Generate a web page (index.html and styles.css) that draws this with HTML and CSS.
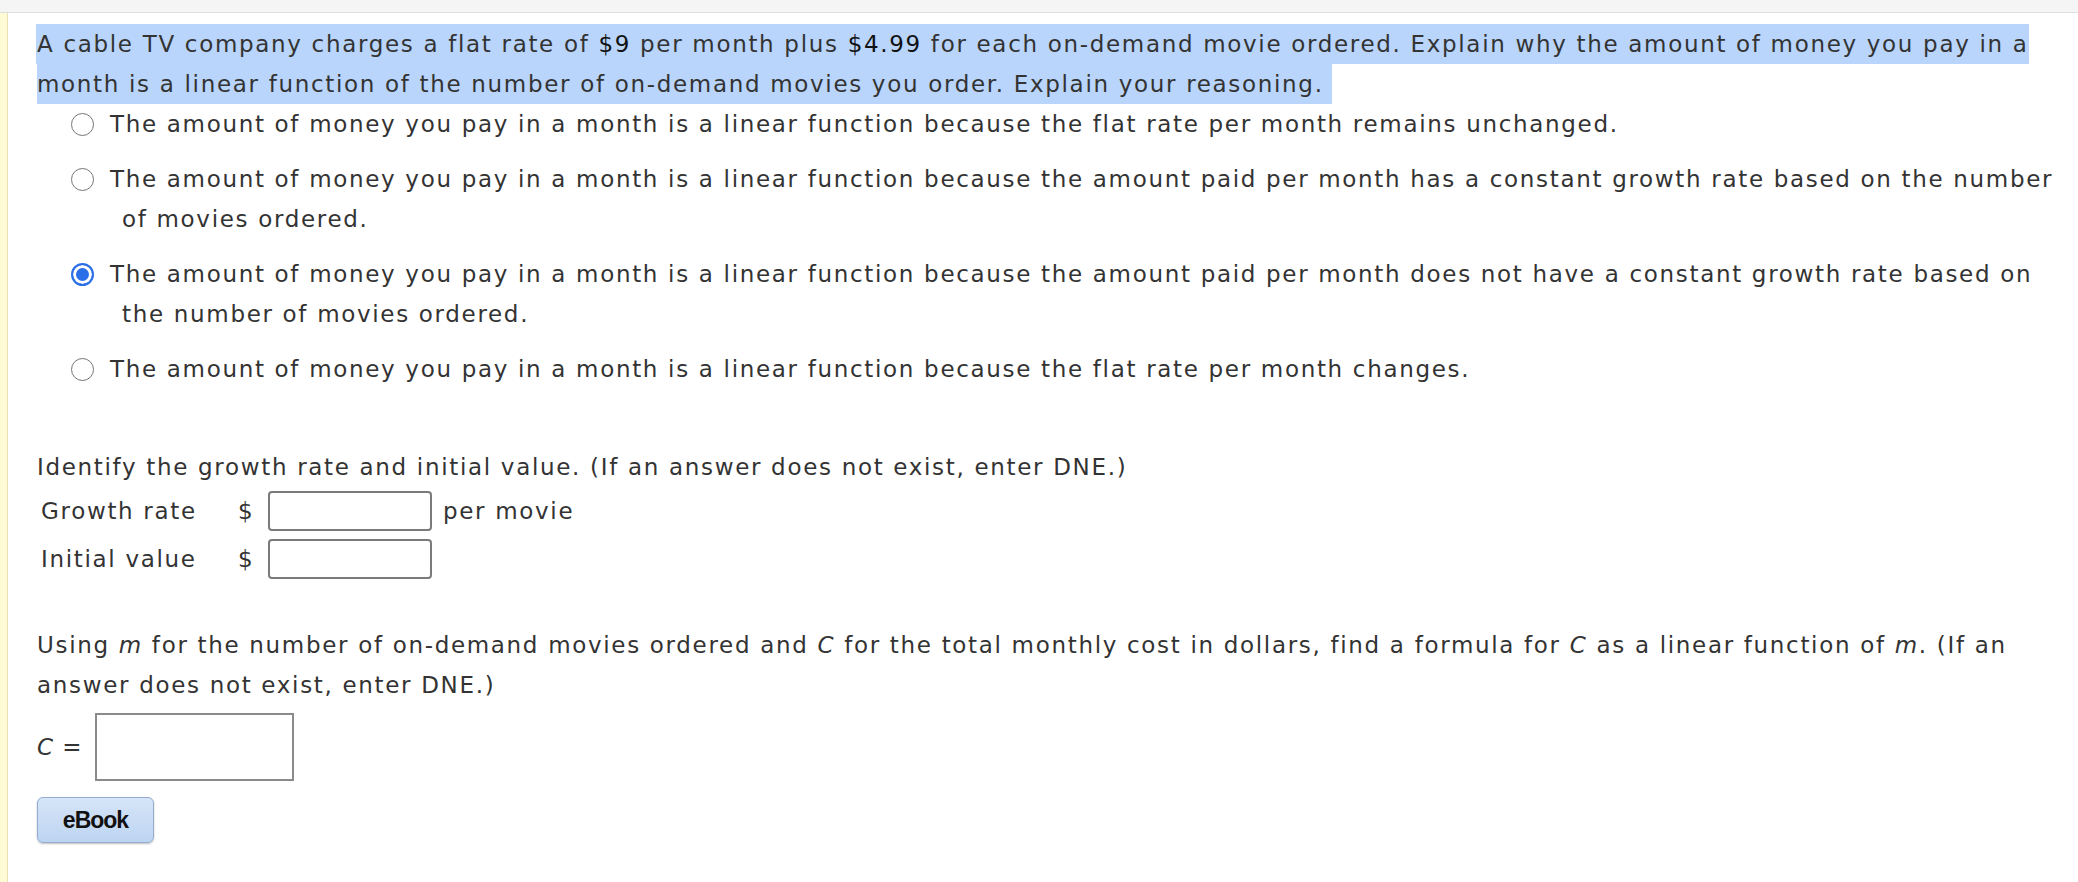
FILE: index.html
```html
<!DOCTYPE html>
<html>
<head>
<meta charset="utf-8">
<link rel="stylesheet" href="styles.css">
</head>
<body>
<div class="topbar"></div>
<div class="page">
  <div class="sidebar"></div>
  <main class="content">
    <p class="question"><span class="sel">A cable TV company charges a flat rate of <span class="num">$9</span> per month plus <span class="num">$4.99</span> for each on-demand movie ordered. Explain why the amount of money you pay in a month is a linear function of the number of on-demand movies you order. Explain your reasoning.</span></p>
    <div class="options">
      <div class="option"><span class="radio"></span><span class="label">The amount of money you pay in a month is a linear function because the flat rate per month remains unchanged.</span></div>
      <div class="option"><span class="radio"></span><span class="label">The amount of money you pay in a month is a linear function because the amount paid per month has a constant growth rate based on the number of movies ordered.</span></div>
      <div class="option"><span class="radio checked"></span><span class="label">The amount of money you pay in a month is a linear function because the amount paid per month does not have a constant growth rate based on the number of movies ordered.</span></div>
      <div class="option"><span class="radio"></span><span class="label">The amount of money you pay in a month is a linear function because the flat rate per month changes.</span></div>
    </div>

    <p class="prompt">Identify the growth rate and initial value. (If an answer does not exist, enter DNE.)</p>
    <div class="fields">
      <div class="field-row">
        <span class="field-label">Growth rate</span>
        <span class="dollar">$</span>
        <span class="box small"></span>
        <span class="unit">per movie</span>
      </div>
      <div class="field-row">
        <span class="field-label">Initial value</span>
        <span class="dollar">$</span>
        <span class="box small"></span>
      </div>
    </div>

    <p class="prompt2">Using <i>m</i> for the number of on-demand movies ordered and <i>C</i> for the total monthly cost in dollars, find a formula for <i>C</i> as a linear function of <i>m</i>. (If an answer does not exist, enter DNE.)</p>
    <div class="formula">
      <span class="formula-label"><i>C</i> =</span>
      <span class="box large"></span>
    </div>

    <button class="ebook">eBook</button>
  </main>
</div>
</body>
</html>
```

FILE: styles.css
```css
html, body {
  margin: 0;
  padding: 0;
  background: #ffffff;
}

body {
  font-family: "DejaVu Sans", Verdana, sans-serif;
  font-size: 23px;
  letter-spacing: 1.68px;
  color: #333333;
  width: 2078px;
  height: 882px;
  overflow: hidden;
}

.topbar {
  height: 12px;
  background: #f5f5f5;
  border-bottom: 1px solid #dedede;
}

.page {
  display: flex;
  height: 869px;
}

.sidebar {
  width: 7px;
  background: #fffbd6;
  border-right: 1px solid #e9e2b0;
  flex: none;
}

.content {
  flex: 1;
  padding: 11px 17px 0 29px;
  line-height: 40px;
}

.question {
  margin: 0;
}

.sel {
  background: #b9d5fb;
  padding: 7px 8px 7px 1px;
  margin-left: -1px;
  -webkit-box-decoration-break: slice;
  box-decoration-break: slice;
}

.num {
  color: #111111;
}

.options {
  display: flex;
  flex-direction: column;
  gap: 15px;
  padding-left: 34px;
}

.option {
  display: flex;
  align-items: flex-start;
}

.radio {
  flex: none;
  width: 23px;
  height: 23px;
  box-sizing: border-box;
  border: 1.5px solid #767676;
  border-radius: 50%;
  margin-top: 9px;
  margin-right: 16px;
  background: #ffffff;
}

.radio.checked {
  border: 2px solid #2b6fe8;
  background: #2b6fe8;
  box-shadow: inset 0 0 0 3px #ffffff;
}

.label {
  padding-left: 12px;
  text-indent: -12px;
}

.prompt {
  margin: 58px 0 0 0;
}

.fields {
  display: flex;
  flex-direction: column;
}

.field-row {
  display: flex;
  align-items: center;
  height: 48px;
}

.field-label {
  width: 197px;
  padding-left: 4px;
  flex: none;
}

.dollar {
  width: 30px;
  flex: none;
}

.box {
  display: block;
  box-sizing: border-box;
  background: #ffffff;
  flex: none;
}

.box.small {
  width: 164px;
  height: 40px;
  border: 2px solid #7a7a7a;
  border-radius: 4px;
}

.unit {
  margin-left: 11px;
}

.prompt2 {
  margin: 42px 0 0 0;
}

.formula {
  display: flex;
  align-items: center;
  margin-top: 8px;
}

.formula-label {
  width: 58px;
  flex: none;
  letter-spacing: 1px;
}

.box.large {
  width: 199px;
  height: 68px;
  border: 2px solid #8a8a8a;
}

.ebook {
  display: block;
  margin-top: 16px;
  width: 117px;
  height: 46px;
  border: 1px solid #93acd0;
  border-radius: 6px;
  background: linear-gradient(#d6e5f8, #bdd4f1);
  box-shadow: 0 1px 2px rgba(0, 0, 0, 0.25);
  font-family: "Liberation Sans", Arial, sans-serif;
  font-weight: bold;
  font-size: 23px;
  letter-spacing: -1px;
  color: #111111;
  padding: 0;
}
```
